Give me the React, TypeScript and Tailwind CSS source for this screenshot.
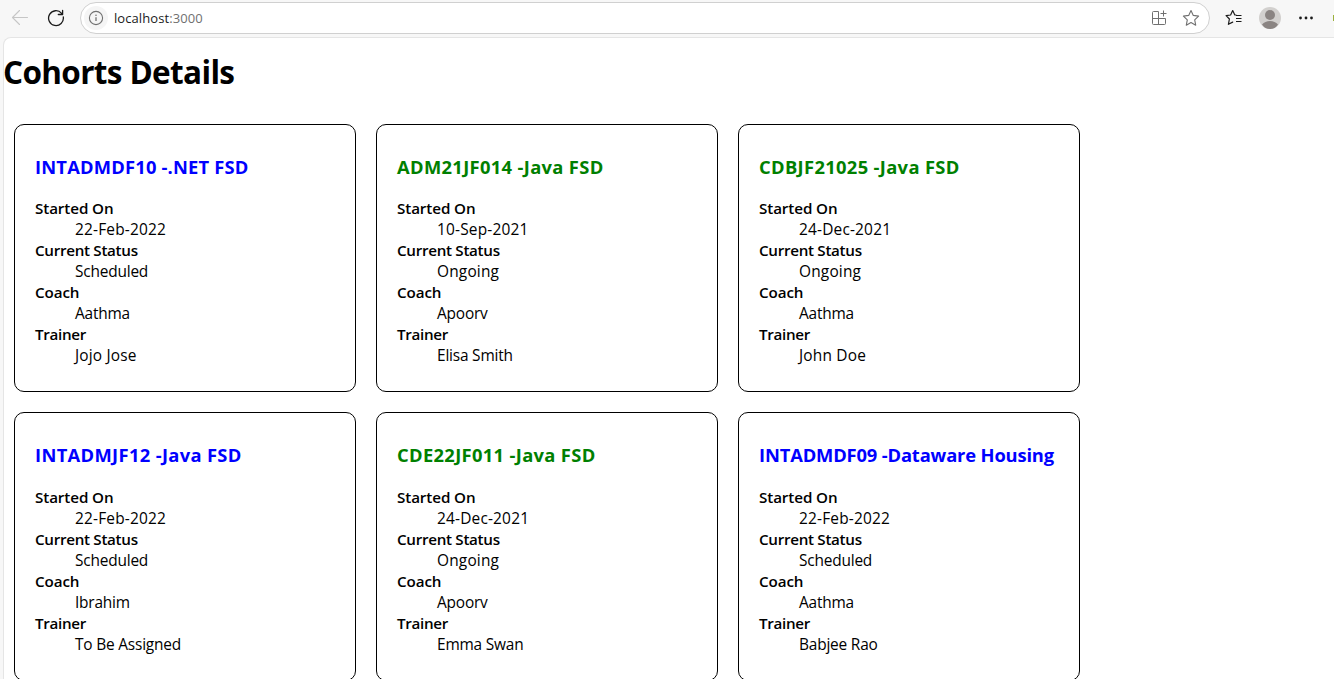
import React from "react";

type Cohort = {
  code: string;
  track: string;
  startedOn: string;
  status: "Scheduled" | "Ongoing";
  coach: string;
  trainer: string;
};

const cohorts: Cohort[] = [
  { code: "INTADMDF10", track: ".NET FSD", startedOn: "22-Feb-2022", status: "Scheduled", coach: "Aathma", trainer: "Jojo Jose" },
  { code: "ADM21JF014", track: "Java FSD", startedOn: "10-Sep-2021", status: "Ongoing", coach: "Apoorv", trainer: "Elisa Smith" },
  { code: "CDBJF21025", track: "Java FSD", startedOn: "24-Dec-2021", status: "Ongoing", coach: "Aathma", trainer: "John Doe" },
  { code: "INTADMJF12", track: "Java FSD", startedOn: "22-Feb-2022", status: "Scheduled", coach: "Ibrahim", trainer: "To Be Assigned" },
  { code: "CDE22JF011", track: "Java FSD", startedOn: "24-Dec-2021", status: "Ongoing", coach: "Apoorv", trainer: "Emma Swan" },
  { code: "INTADMDF09", track: "Dataware Housing", startedOn: "22-Feb-2022", status: "Scheduled", coach: "Aathma", trainer: "Babjee Rao" },
];

const titleTracking: Record<string, string> = {
  ".NET FSD": "tracking-[0.18px]",
  "Java FSD": "tracking-[0.33px]",
  "Dataware Housing": "tracking-[-0.16px]",
};

const wideValues = new Set(["Jojo Jose", "John Doe", "Ongoing"]);

function valueTracking(value: string) {
  if (/^\d/.test(value) || wideValues.has(value)) return "tracking-[0.18px]";
  return "tracking-[-0.2px]";
}

function BackIcon() {
  return (
    <svg width="18" height="18" viewBox="0 0 18 18" fill="none" stroke="#c6c6c6" strokeWidth="1.1" strokeLinecap="round" strokeLinejoin="round">
      <path d="M16.500 8.500H1.500M8.500 1.500l-7 7 7 7" />
    </svg>
  );
}

function ReloadIcon() {
  return (
    <svg width="18" height="18" viewBox="0 0 18 18" fill="none" stroke="#1b1b1b" strokeWidth="1.3" strokeLinecap="round" strokeLinejoin="round">
      <path d="M16.300 8A7.400 7.400 0 1 1 14.600 4.300L15.600 5.300M15.600 1.500V5.500h-4.300" />
    </svg>
  );
}

function InfoIcon() {
  return (
    <svg width="16" height="16" viewBox="0 0 16 16" fill="none" stroke="#707070" strokeWidth="1.1">
      <circle cx="8" cy="8" r="6.6" />
      <path d="M8 7.2v3.8" strokeWidth="1.3" />
      <circle cx="8" cy="5.2" r=".8" fill="#707070" stroke="none" />
    </svg>
  );
}

function AppsIcon() {
  return (
    <svg width="16" height="16" viewBox="0 0 16 16" fill="none" stroke="#707070" strokeWidth="1" strokeLinejoin="round">
      <path d="M7.500 1.500H2.500a1 1 0 0 0-1 1V13.500a1 1 0 0 0 1 1H13.500a1 1 0 0 0 1-1V8.500H1.500M7.500 1.500V14.500M12.500.5v6M9.500 3.500h6" />
    </svg>
  );
}

function StarIcon() {
  return (
    <svg width="18" height="18" viewBox="0 0 18 18" fill="none" stroke="#707070" strokeWidth="1.1" strokeLinejoin="round">
      <path d="m9 1.500 2.300 4.900 5.300.7-3.900 3.700 1 5.400L9 13.600l-4.700 2.600 1-5.400L1.400 7.100l5.300-.7Z" />
    </svg>
  );
}

function FavoritesIcon() {
  return (
    <svg width="18" height="18" viewBox="0 0 18 18" fill="none" stroke="#1b1b1b" strokeWidth="1.2" strokeLinejoin="round" strokeLinecap="round">
      <path d="M11 6 9.800 5.900 7.700 1.600 5.600 6l-4.500.7 3.300 3.300-1 5.300 4.300-2.200" />
      <path d="M11 6.500h5.500M11 9.500h5.500M11 12.500h5.500" strokeLinecap="butt" />
    </svg>
  );
}

function Avatar() {
  return (
    <svg width="22" height="22" viewBox="0 0 22 22">
      <circle cx="11" cy="11" r="11" fill="#d2d0ce" />
      <circle cx="11" cy="8" r="5" fill="#8a8482" />
      <path d="M3 17.500Q6 14 11 14t8 3.500Q16 22 11 22t-8-4.500Z" fill="#8a8482" />
    </svg>
  );
}

function BrowserBar() {
  return (
    <header className="flex h-[37px] shrink-0 items-start bg-[#f7f7f7] pl-[11px]">
      <div className="flex h-9 w-[69px] items-center gap-[18px]">
        <BackIcon />
        <ReloadIcon />
      </div>
      <div className="mt-0.5 flex h-8 w-[1130px] items-center rounded-full border border-[#d0d0d0] bg-white pl-[3px] pr-[9px]">
        <span className="flex size-6 items-center justify-center rounded-full bg-[#f5f5f5]">
          <InfoIcon />
        </span>
        <span className="ml-[6px] text-[13px] leading-5 tracking-[0.08px] text-[#1b1b1b]">
          localhost<span className="text-[#707070]">:3000</span>
        </span>
        <div className="ml-auto flex items-center gap-[15px]">
          <AppsIcon />
          <StarIcon />
        </div>
      </div>
      <div className="flex h-9 flex-1 items-center pl-[15px]">
        <FavoritesIcon />
        <span className="ml-4"><Avatar /></span>
        <svg className="ml-[18px]" width="14" height="4" viewBox="0 0 14 4" fill="#1b1b1b">
          <circle cx="1.500" cy="2" r="1.400" />
          <circle cx="7" cy="2" r="1.400" />
          <circle cx="12.500" cy="2" r="1.400" />
        </svg>
        <span className="ml-auto h-[6px] w-px bg-[#9bb03c]" />
      </div>
    </header>
  );
}

function Detail({ term, value }: { term: string; value: string }) {
  return (
    <>
      <dt className={`font-semibold ${term === "Started On" || term === "Coach" ? "tracking-[-0.1px]" : "tracking-[-0.3px]"}`}>{term}</dt>
      <dd className={`ml-10 text-[15.450px] ${valueTracking(value)}`}>{value}</dd>
    </>
  );
}

function CohortCard({ cohort }: { cohort: Cohort }) {
  return (
    <article className="h-[268.400px] rounded-[10px] border border-black px-5 pt-[29px]">
      <h3 className={`text-[18.350px] leading-[25px] font-bold whitespace-nowrap ${titleTracking[cohort.track]} ${cohort.status === "Ongoing" ? "text-[#008000]" : "text-[#0000ff]"}`}>
        {cohort.code} -{cohort.track}
      </h3>
      <dl className="mt-[19.400px] text-[15.200px] leading-[21px]">
        <Detail term="Started On" value={cohort.startedOn} />
        <Detail term="Current Status" value={cohort.status} />
        <Detail term="Coach" value={cohort.coach} />
        <Detail term="Trainer" value={cohort.trainer} />
      </dl>
    </article>
  );
}

export default function App() {
  return (
    <div className="flex h-[679px] w-[1334px] flex-col overflow-hidden bg-[#f7f7f7] font-['Open_Sans','Noto_Sans',sans-serif] text-black">
      <BrowserBar />
      <main className="ml-[3px] flex-1 overflow-hidden rounded-tl-lg border-t border-l border-[#e5e5e5] bg-white">
        <h1 className="-ml-px mt-[12px] text-[31.500px] leading-[43px] font-bold tracking-[-0.65px]">Cohorts Details</h1>
        <section className="mt-[31px] ml-[10px] grid grid-cols-[342px_342px_342px] gap-5">
          {cohorts.map((cohort) => (
            <CohortCard key={cohort.code} cohort={cohort} />
          ))}
        </section>
      </main>
    </div>
  );
}
